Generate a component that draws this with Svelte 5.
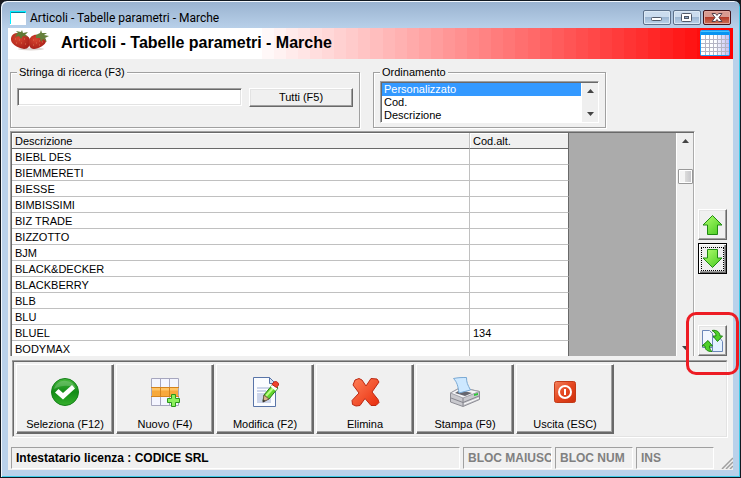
<script>
    const title = "Articoli - Tabelle parametri - Marche";

    const orders = ["Personalizzato", "Cod.", "Descrizione"];

    const rows = [
        { name: "BIEBL DES", alt: "" },
        { name: "BIEMMERETI", alt: "" },
        { name: "BIESSE", alt: "" },
        { name: "BIMBISSIMI", alt: "" },
        { name: "BIZ TRADE", alt: "" },
        { name: "BIZZOTTO", alt: "" },
        { name: "BJM", alt: "" },
        { name: "BLACK&DECKER", alt: "" },
        { name: "BLACKBERRY", alt: "" },
        { name: "BLB", alt: "" },
        { name: "BLU", alt: "" },
        { name: "BLUEL", alt: "134" },
        { name: "BODYMAX", alt: "" },
    ];

    const actions = [
        { icon: "ok", label: "Seleziona (F12)" },
        { icon: "new", label: "Nuovo (F4)" },
        { icon: "edit", label: "Modifica (F2)" },
        { icon: "delete", label: "Elimina" },
        { icon: "print", label: "Stampa (F9)" },
        { icon: "exit", label: "Uscita (ESC)" },
    ];

    // the banner fades from white to red in flat vertical bands
    const bands = 60;
    const firstBand = 21;
    const stops = [];
    for (let i = firstBand; i <= bands; i++) {
        const c = Math.round(255 * (1 - (i - firstBand) / (bands - firstBand)));
        const from = i === firstBand ? 0 : ((i - 1) / bands) * 100;
        stops.push(`rgb(255 ${c} ${c}) ${from}% ${(i / bands) * 100}%`);
    }
    const banner = `linear-gradient(to right, ${stops.join(", ")})`;

    let search = $state("");
    let order = $state("Personalizzato");
</script>

<div class="window">
    <header class="titlebar">
        <svg class="app-icon" width="16" height="14" viewBox="0 0 16 14">
            <rect width="16" height="14" fill="#fff" />
            <path d="M0 0h16v2H0zM0 2h1v11H0z" fill="#0ef" />
            <path d="M1 1h14v1H1z" fill="#087f9c" />
        </svg>
        <span class="caption">{title}</span>
        <div class="controls">
            <button aria-label="Riduci a icona">
                <svg width="26" height="13" viewBox="0 0 26 13">
                    <rect x="7.5" y="6.5" width="10" height="3" rx="1" fill="#fff" stroke="#515968" />
                </svg>
            </button>
            <button aria-label="Ingrandisci">
                <svg width="26" height="13" viewBox="0 0 26 13">
                    <rect x="7.5" y="2.5" width="10" height="8" rx="1" fill="#fff" stroke="#515968" />
                    <rect x="10.5" y="5.5" width="4" height="2" fill="#8fa9c6" stroke="#515968" />
                </svg>
            </button>
            <button class="close" aria-label="Chiudi">
                <svg width="26" height="13" viewBox="0 0 26 13">
                    <path
                        d="M8 2.5h3.4L13 4.4l1.6-1.9H18l-3 4 3 4h-3.4L13 8.6l-1.6 1.9H8l3-4z"
                        fill="#fff"
                        stroke="#54414b"
                    />
                </svg>
            </button>
        </div>
    </header>

    <main class="client">
        <div class="banner" style="background: {banner}">
            <svg class="berries" width="38" height="22" viewBox="0 0 38 22">
                <defs>
                    <radialGradient id="berry" cx="40%" cy="35%" r="70%">
                        <stop offset="0" stop-color="#d8452f" />
                        <stop offset="1" stop-color="#a51f18" />
                    </radialGradient>
                </defs>
                <ellipse cx="20" cy="19" rx="13" ry="1.5" fill="#ddd6d2" />
                <path d="M0 8c1-5 6-6 11-4 5 1 8 3 8 7 0 5-2 8-6 8C8 18-1 15 0 8z" fill="url(#berry)" />
                <path d="M18 11c1-5 5-7 9-6 5 0 8 3 8 6 0 4-8 8-12 8-4 0-6-4-5-8z" fill="url(#berry)" />
                <path d="M3 5l4-2-2-2 5 1 1-2 1 3 5-1-3 3 3 2-5-1-2 3-2-3-4 1 2-3z" fill="#5f7a35" />
                <path d="M25 5l4-2 1-3 1 3 5 0-3 2 5 1-4 2 2 4-4-3-2 3-1-4-4 0z" fill="#66803c" />
                <path
                    d="M4 9h1M8 10h1M5 13h1M10 13h1M13 9h1M14 14h1M22 10h1M25 13h1M22 15h1M28 11h1M28 15h1M31 12h1"
                    stroke="#d9704f"
                />
            </svg>
            <h1>{title}</h1>
            <svg class="calendar" width="30" height="27" viewBox="0 0 30 27">
                <defs>
                    <linearGradient id="sheet" x1="0" x2="1" y1="0" y2="0">
                        <stop offset=".5" stop-color="#fff" />
                        <stop offset="1" stop-color="#bfbcf4" />
                    </linearGradient>
                </defs>
                <rect x=".5" y=".5" width="29" height="25" rx="1" fill="url(#sheet)" stroke="#1c9cf5" />
                <path d="M1 1h28v4H1z" fill="#0794f2" />
                <path d="M1 1.5h28" stroke="#45c3ff" />
                <path
                    d="M1 9.5h28M1 13.5h28M1 17.5h28M1 21.5h28M5.5 5v20M9.5 5v20M13.5 5v20M17.5 5v20M21.5 5v20M25.5 5v20"
                    stroke="#b4b4c4"
                />
            </svg>
        </div>

        <div class="filters">
            <fieldset class="search">
                <legend><label for="search">Stringa di ricerca (F3)</label></legend>
                <input id="search" type="text" bind:value={search} />
                <button class="btn">Tutti (F5)</button>
            </fieldset>
            <fieldset class="order">
                <legend><label for="order">Ordinamento</label></legend>
                <div class="listbox">
                    <select id="order" size="3" bind:value={order}>
                        {#each orders as item}
                            <option class:current={item === order}>{item}</option>
                        {/each}
                    </select>
                    <div class="scrollbar">
                        <svg width="7" height="4" viewBox="0 0 7 4"><path d="M0 4l3.5-4L7 4z" fill="#444" /></svg>
                        <svg width="7" height="4" viewBox="0 0 7 4"><path d="M0 0l3.5 4L7 0z" fill="#444" /></svg>
                    </div>
                </div>
            </fieldset>
        </div>

        <div class="content">
            <div class="grid">
                <table>
                    <thead>
                        <tr>
                            <th class="name">Descrizione</th>
                            <th class="alt">Cod.alt.</th>
                        </tr>
                    </thead>
                    <tbody>
                        {#each rows as row}
                            <tr>
                                <td>{row.name}</td>
                                <td>{row.alt}</td>
                            </tr>
                        {/each}
                    </tbody>
                </table>
                <div class="scrollbar">
                    <svg width="7" height="4" viewBox="0 0 7 4"><path d="M0 4l3.5-4L7 4z" fill="#444" /></svg>
                    <div class="thumb"></div>
                    <svg width="7" height="4" viewBox="0 0 7 4"><path d="M0 0l3.5 4L7 0z" fill="#444" /></svg>
                </div>
            </div>

            <div class="side">
                <svg class="defs" width="0" height="0">
                    <defs>
                        <linearGradient id="green" x1="0" x2="1" y1="0" y2="1">
                            <stop offset="0" stop-color="#b4ff70" />
                            <stop offset="1" stop-color="#43c81c" />
                        </linearGradient>
                    </defs>
                </svg>
                <button class="btn" aria-label="Sposta su">
                    <svg width="21" height="22" viewBox="0 0 21 22">
                        <path d="M10.5 1.500L20 11h-4.500v9.500H5.500V11H1z" fill="url(#green)" stroke="#208a12" />
                    </svg>
                </button>
                <button class="btn focused" aria-label="Sposta giù">
                    <svg width="21" height="22" viewBox="0 0 21 22">
                        <path d="M10.5 19.500L1 10h4.500V1.500h10V10H20z" fill="url(#green)" stroke="#208a12" />
                    </svg>
                </button>
                <div class="marked">
                    <button class="btn" aria-label="Aggiorna">
                        <svg width="23" height="24" viewBox="0 0 23 24">
                            <path d="M1.5 1.5h7l3 3v14h-10z" fill="#f2f7ff" stroke="#6b86b8" />
                            <path d="M11.5 8.5h7l3 4v10h-10z" fill="#e4f2ff" stroke="#6b86b8" />
                            <path d="M11 1.500c5-1 8 2 8 5.500h2.500L16.500 12.500 12 7h3c0-2-1-4-4-5.500z" fill="#4fd12a" stroke="#1e8412" />
                            <path d="M11 22.500c-5 0-7-2-7-5.500H1l6-5.500 4.500 5.500H8.500c0 3 1 4 2.500 5.500z" fill="#4fd12a" stroke="#1e8412" />
                        </svg>
                    </button>
                    <span class="mark"></span>
                </div>
            </div>
        </div>

        <nav class="toolbar">
            {#each actions as action}
                <button class="btn action">
                    <svg width="32" height="32" viewBox="0 0 32 32">
                        {#if action.icon === "ok"}
                            <defs>
                                <linearGradient id="disc" x1="0" x2="0" y1="0" y2="1">
                                    <stop offset="0" stop-color="#46b83c" />
                                    <stop offset=".5" stop-color="#128c16" />
                                    <stop offset="1" stop-color="#35b02c" />
                                </linearGradient>
                            </defs>
                            <circle cx="16" cy="16" r="13.5" fill="url(#disc)" stroke="#15801a" />
                            <path d="M5 13c2-6 7-9 12-8 5 0 8 3 10 7-7-3-14-3-22 1z" fill="#fff" opacity=".2" />
                            <path d="M6 16.500l3.500-3.500 4.500 4 9-8 3 3.500L14 23.500z" fill="#fff" />
                        {:else if action.icon === "new"}
                            <rect x="2.5" y="2.5" width="27" height="27" fill="#f4f5ff" />
                            <path d="M2 11.5h28v9H2z" fill="#f7a83c" />
                            <path d="M2 11.5h28v3H2z" fill="#ffc468" />
                            <path d="M2.5 2.5h27v27h-27zM11.5 2v28M20.5 2v28" fill="none" stroke="#a6a6be" />
                            <path d="M2 11.5h28M2 20.5h28M11.5 12v8M20.5 12v8" stroke="#d3831f" />
                            <path d="M22.500 18.500h4v4h4v4h-4v4h-4v-4h-4v-4h4z" fill="#8cf05c" stroke="#2a961c" />
                        {:else if action.icon === "edit"}
                            <path d="M4.5 1.5h16l6 6v23h-22z" fill="#fafcff" stroke="#5874a8" />
                            <path d="M20.5 1.5v6h6z" fill="#d2e0f4" stroke="#5874a8" />
                            <path d="M8 12h12M8 15h9" stroke="#ccd5ea" stroke-width="2" />
                            <path d="M8 17h14v10H8z" fill="#ccd5ea" />
                            <path d="M14 25l1-6 9-11 5 4-9 11z" fill="#62d52d" stroke="#257a18" />
                            <path d="M17 20l9-10" stroke="#b9ff84" stroke-width="2" />
                            <path d="M14 26l1-7 5 4z" fill="#d9b58c" stroke="#6f5846" />
                            <path d="M13.5 26.5l1-3 2 1.5z" fill="#333" />
                            <path d="M22.5 9.5l5 4" stroke="#fff" stroke-width="3" />
                            <path d="M24 7c2-3 6-1 5.500 2l-2 2.500L23 8.500z" fill="#f0442e" stroke="#b92618" />
                        {:else if action.icon === "delete"}
                            <defs>
                                <linearGradient id="cross" x1="0" x2="1" y1="0" y2="1">
                                    <stop offset="0" stop-color="#ff8058" />
                                    <stop offset="1" stop-color="#e82c0c" />
                                </linearGradient>
                            </defs>
                            <path
                                d="M6 4l4-1.500 3 1.500 4 6 5-7.500 6 .5 2 3-7 10 6 7.500 1 3-3 3h-5l-6-7-5 7-4 .5-3.500-1.500-.5-4 7-7.500-6-8z"
                                fill="url(#cross)"
                                stroke="#bc2812"
                                stroke-linejoin="round"
                            />
                        {:else if action.icon === "print"}
                            <path d="M1.500 17l10-5.500 19 4v8L14 30.500 1.500 26z" fill="#c9c9ce" stroke="#8c8c94" />
                            <path d="M1.500 17l10-5.500 19 4L14 22z" fill="#f5f5f7" stroke="#a0a0a8" />
                            <path d="M6 17l5-3 12 3-7 3z" fill="#66666e" />
                            <path d="M4.500 2.500c5-1 8-1 13-1 0 5 1 7 4 12.500L10 17c-1-7-2-11-5.500-14.500z" fill="#cde8ff" stroke="#79a9d4" />
                            <path d="M14 22v8M2 22l12 4.500 16-6.500" fill="none" stroke="#86868e" />
                            <path d="M15 28l15-6" stroke="#fff" />
                            <path d="M25 18l4-1v2l-4 1z" fill="#2fc63a" />
                        {:else}
                            <defs>
                                <linearGradient id="power" x1="0" x2="1" y1="0" y2="1">
                                    <stop offset="0" stop-color="#f4835f" />
                                    <stop offset=".5" stop-color="#e4461f" />
                                    <stop offset="1" stop-color="#ce2f0c" />
                                </linearGradient>
                            </defs>
                            <rect x="5.5" y="5.5" width="21" height="21" rx="2" fill="url(#power)" stroke="#c23a18" />
                            <circle cx="16" cy="16" r="6" fill="none" stroke="#fff" stroke-width="2" />
                            <path d="M16 13v6" stroke="#fff" stroke-width="2" />
                        {/if}
                    </svg>
                    <span>{action.label}</span>
                </button>
            {/each}
        </nav>

        <footer class="status">
            <span class="cell licence">Intestatario licenza : CODICE SRL</span>
            <span class="cell caps">BLOC MAIUSC</span>
            <span class="cell key">BLOC NUM</span>
            <span class="cell key">INS</span>
            <svg class="grip" width="12" height="12" viewBox="0 0 12 12">
                <path d="M1 12L12 1M5 12l7-7M9 12l3-3" stroke="#a0a0a0" stroke-width="1.5" />
            </svg>
        </footer>
    </main>
</div>

<style>
    :global(body) {
        background: #1a1a1e;
    }

    .window {
        box-sizing: border-box;
        padding: 0 7px 7px;
        border: 1px solid #111820;
        border-radius: 7px 7px 0 0;
        background: linear-gradient(#99b2cf, #b9d1ea 28px);
        box-shadow:
            inset 1px 1px 0 #f2f7fc,
            inset -1px -1px 0 #3fcbe8;
        color: #000;
        font-family: "Liberation Sans", Arial, sans-serif;
        font-size: 11px;
        line-height: 13px;
    }

    .titlebar {
        display: flex;
        align-items: center;
        height: 27px;
        padding: 6px 2px 0;
        box-sizing: border-box;
    }

    .caption {
        flex: 1;
        margin-left: 4px;
        font-family: Roboto, sans-serif;
        font-size: 12px;
        line-height: 16px;
        white-space: nowrap;
    }

    .controls {
        display: flex;
        gap: 2px;
    }

    .controls button {
        width: 28px;
        height: 15px;
        padding: 0;
        border: 1px solid #5d718b;
        border-radius: 2px;
        background: linear-gradient(#cbdcee 50%, #9db7d3 50%, #bcd3ea);
        box-shadow: inset 0 0 0 1px #dce9f5;
    }

    .controls .close {
        border-color: #43141a;
        background: linear-gradient(#d89a90 50%, #b43c2a 50%, #cf7257);
        box-shadow: inset 0 0 0 1px #e2aaa0;
    }

    .controls svg,
    .btn svg {
        display: block;
    }

    .client {
        background: #f0f0f0;
    }

    .banner {
        display: flex;
        align-items: flex-start;
        box-sizing: border-box;
        height: 31px;
        padding: 2px 3px;
    }

    h1 {
        flex: 1;
        margin: 3px 0 0 12px;
        font-size: 16px;
        line-height: 20px;
        font-weight: bold;
        white-space: nowrap;
    }

    .filters {
        display: flex;
        gap: 13px;
        padding: 7px 2px 3px;
    }

    fieldset {
        box-sizing: border-box;
        height: 62px;
        margin: 0;
        border: 1px solid #a0a0a0;
        box-shadow:
            1px 1px 0 #fff,
            inset 1px 1px 0 #fff;
    }

    legend {
        padding: 0 2px;
        background: #f0f0f0;
    }

    .search {
        display: flex;
        align-items: flex-start;
        gap: 7px;
        width: 350px;
        padding: 9px 6px 0;
    }

    .search input {
        flex: 1;
        min-width: 0;
        box-sizing: border-box;
        height: 18px;
        padding: 0 2px;
        border: 1px solid;
        border-color: #a0a0a0 #fff #fff #a0a0a0;
        box-shadow:
            inset 1px 1px 0 #696969,
            inset -1px -1px 0 #e3e3e3;
        background: #fff;
        font: inherit;
    }

    .btn {
        box-sizing: border-box;
        padding: 0;
        border: 1px solid;
        border-color: #fff #696969 #696969 #fff;
        box-shadow:
            inset -1px -1px 0 #a0a0a0,
            inset 1px 1px 0 #e3e3e3;
        background: #f0f0f0;
        color: #000;
        font: inherit;
    }

    .search .btn {
        width: 104px;
        height: 19px;
    }

    .order {
        width: 233px;
        padding: 2px 6px 0;
    }

    .listbox {
        display: flex;
        border: 1px solid;
        border-color: #a0a0a0 #fff #fff #a0a0a0;
        box-shadow: inset 1px 1px 0 #696969;
        padding: 1px 0 0 1px;
    }

    select {
        flex: 1;
        height: 39px;
        padding: 0;
        border: none;
        border-radius: 0;
        outline: none;
        overflow: hidden;
        appearance: none;
        background: #fff;
        font: inherit;
    }

    option {
        min-height: 13px;
        padding: 0 2px;
        line-height: 13px;
    }

    option.current {
        background: linear-gradient(#39f, #39f);
        color: #fff;
    }

    .scrollbar {
        box-sizing: border-box;
        display: flex;
        flex-direction: column;
        align-items: center;
        justify-content: space-between;
        width: 17px;
        padding: 6px 0;
        background: #efefef;
        border-left: 1px solid #fff;
    }

    .content {
        display: flex;
        gap: 3px;
        padding: 0 6px 0 2px;
    }

    .grid {
        flex: 1;
        display: flex;
        justify-content: space-between;
        border: solid;
        border-width: 1px 1px 0 1px;
        border-color: #a0a0a0 #fff #fff #a0a0a0;
        box-shadow: inset 1px 1px 0 #696969;
        padding: 1px 1px 0 1px;
        background: #ababab;
    }

    table {
        border-collapse: separate;
        border-spacing: 0;
        table-layout: fixed;
        width: 557px;
        background: #fff;
    }

    th,
    td {
        height: 13px;
        padding: 2px 3px 0;
        border-right: 1px solid #c0c0c0;
        border-bottom: 1px solid #c0c0c0;
        text-align: left;
        font-weight: normal;
        line-height: 13px;
    }

    th {
        border-bottom-color: #696969;
        background: #f0f0f0;
        box-shadow: inset 1px 1px 0 #fff;
    }

    th:last-child,
    td:last-child {
        border-right-color: #696969;
    }

    tbody tr:last-child td {
        border-bottom: none;
    }

    .alt {
        width: 92px;
    }

    .thumb {
        box-sizing: border-box;
        width: 15px;
        height: 15px;
        margin: 26px 0 auto;
        border: 1px solid #989898;
        border-radius: 1px;
        background: linear-gradient(to right, #f4f4f4 45%, #dadada 50%, #c4c4c8);
        box-shadow: inset 0 0 0 1px #fff;
    }

    .side {
        display: flex;
        flex-direction: column;
        gap: 3px;
        padding-top: 78px;
    }

    .defs {
        position: absolute;
    }

    .side .btn {
        display: grid;
        place-items: center;
        width: 29px;
        height: 31px;
    }

    .side .focused {
        border-color: #000;
        box-shadow:
            inset 1px 1px 0 #fff,
            inset -1px -1px 0 #696969,
            inset -2px -2px 0 #a0a0a0;
    }

    .focused svg {
        outline: 1px dotted #000;
    }

    .marked {
        position: relative;
        margin-top: auto;
    }

    .mark {
        position: absolute;
        inset: -13px -12px -19px;
        border: 3px solid #ed1c24;
        border-radius: 10px;
        pointer-events: none;
    }

    .toolbar {
        display: flex;
        gap: 2px;
        margin: 5px 6px 0 4px;
        padding: 2px 3px;
        border: 1px solid;
        border-color: #696969 #e3e3e3 #e3e3e3 #a0a0a0;
        box-shadow:
            0 -1px 0 #a0a0a0,
            inset 1px 0 0 #696969,
            1px 1px 0 #fff;
    }

    .action {
        display: flex;
        flex-direction: column;
        align-items: center;
        gap: 10px;
        width: 98px;
        height: 70px;
        padding-top: 11px;
        box-shadow:
            inset -1px -1px 0 #696969,
            inset -2px -2px 0 #a0a0a0;
    }

    .status {
        display: flex;
        gap: 3px;
        padding: 10px 0 1px 3px;
        font-size: 12px;
        font-weight: bold;
    }

    .cell {
        box-sizing: border-box;
        height: 22px;
        padding: 0 4px;
        border: 1px solid;
        border-color: #a0a0a0 #fff #fff #a0a0a0;
        line-height: 21px;
        white-space: nowrap;
        overflow: hidden;
    }

    .licence {
        flex: 1;
    }

    .caps {
        width: 89px;
        color: #808080;
    }

    .key {
        width: 78px;
        color: #808080;
    }

    .grip {
        align-self: flex-end;
        margin-left: 4px;
    }
</style>
